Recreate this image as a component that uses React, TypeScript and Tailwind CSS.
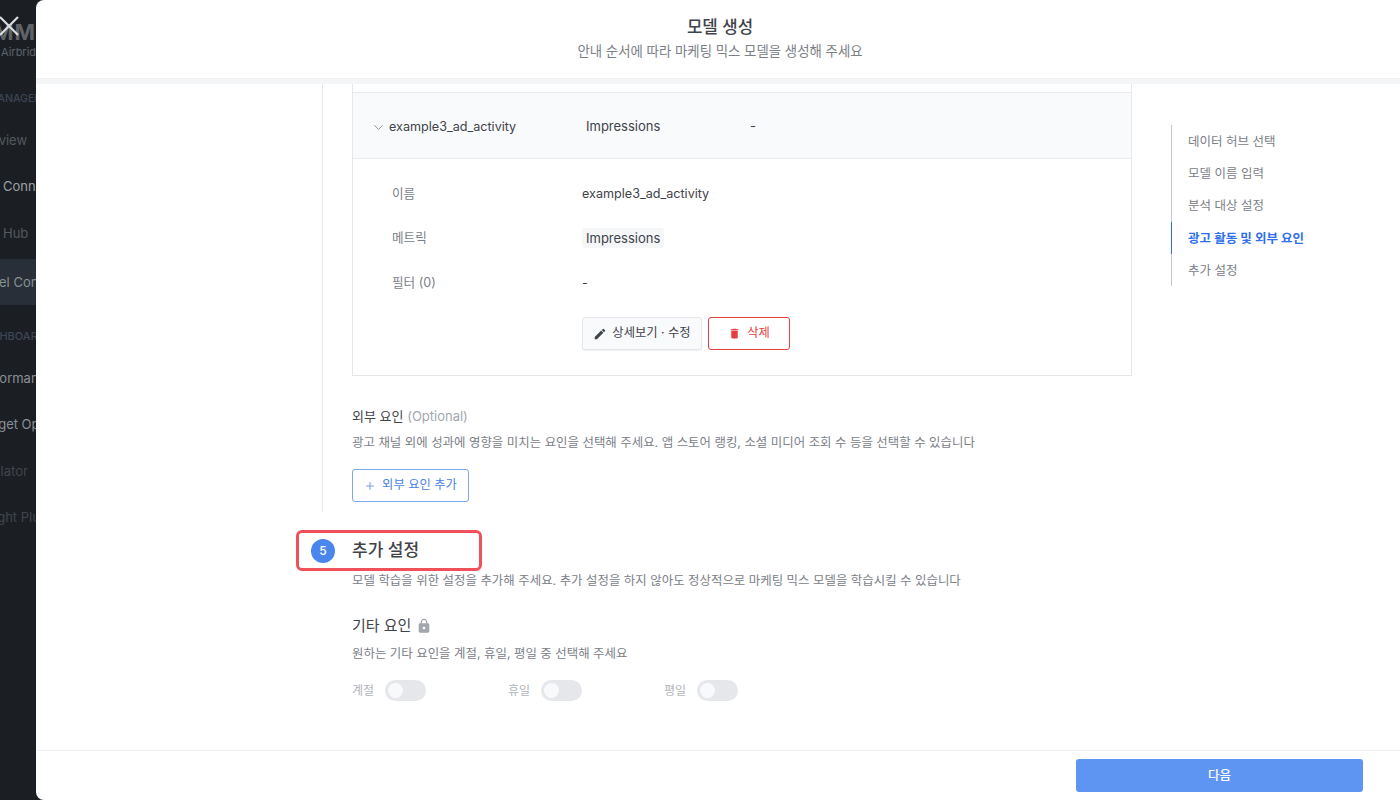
import { ChevronDown, Plus } from "lucide-react";
import { MdDelete, MdEdit, MdLock } from "react-icons/md";

const font = { fontFamily: '"Inter", "Noto Sans CJK KR", sans-serif' };

const tocItems = [
  { label: "데이터 허브 선택", active: false },
  { label: "모델 이름 입력", active: false },
  { label: "분석 대상 설정", active: false },
  { label: "광고 활동 및 외부 요인", active: true },
  { label: "추가 설정", active: false },
];

function Sidebar() {
  return (
    <div className="relative w-[36px] shrink-0 overflow-hidden bg-[#1b1f24] whitespace-nowrap">
      <div className="absolute left-[-3px] top-[14px] text-[#d9dbde]">
        <svg width="24" height="24" viewBox="0 0 24 24" fill="none" stroke="currentColor" strokeWidth="2.2">
          <path d="M3 3 L21 21 M21 3 L3 21" />
        </svg>
      </div>
      <div className="h-[93px] pt-[20px]">
        <div className="text-[22px] leading-[24px] font-bold tracking-[1px] text-[#5f6368] ml-[-7px]">MMM</div>
        <div className="text-[11px] leading-[14px] text-[#5f6368] ml-[1px] mt-[1px]">Airbridge</div>
      </div>
      <div className="ml-[-12px] text-[10.5px] leading-[11px] font-medium text-[#3d4654]">MANAGER</div>
      <div className="ml-[-31px] mt-[24px] h-[24px] text-[13px] leading-[24px] text-[#54585d]">Overview</div>
      <div className="ml-[3px] mt-[22px] h-[24px] text-[13px] leading-[24px] text-[#9ca0a4]">Connectors</div>
      <div className="ml-[3px] mt-[23px] h-[24px] text-[13px] leading-[24px] text-[#54585d]">Hub</div>
      <div className="mt-[14px] h-[46px] bg-[#282f38] text-[13px] leading-[46px] text-[#8a8f95]">
        <span className="ml-[-1px]">el Connect</span>
      </div>
      <div className="ml-[-23px] mt-[26px] text-[11px] leading-[11px] font-medium text-[#3d4654]">DASHBOARD</div>
      <div className="ml-[-26px] mt-[24px] h-[24px] text-[13px] leading-[24px] text-[#8a8f95]">Performance</div>
      <div className="ml-[-26px] mt-[22px] h-[24px] text-[13px] leading-[24px] text-[#8a8f95]">Budget Opt</div>
      <div className="ml-[-30px] mt-[23px] h-[24px] text-[13px] leading-[24px] text-[#41454a]">Simulator</div>
      <div className="ml-[-24px] mt-[22px] h-[24px] text-[13px] leading-[24px] text-[#41454a]">Insight Plus</div>
    </div>
  );
}

function DetailRow({ label, children }: { label: string; children: React.ReactNode }) {
  return (
    <div className="flex h-[22px] items-center">
      <div className="w-[229px] pl-[39px] text-[12.6px] text-[#7b8088]">{label}</div>
      <div className="text-[12.6px] text-[#3f434a]">{children}</div>
    </div>
  );
}

function Toggle({ label, width }: { label: string; width: string }) {
  return (
    <div className={`flex items-center ${width}`}>
      <span className="w-[33px] text-[12px] text-[#b0b4ba]">{label}</span>
      <div className="flex h-[21px] w-[41px] items-center rounded-full bg-[#e5e7eb] pl-[3px]">
        <div className="h-[15px] w-[15px] rounded-full bg-[#f8f9fa]" />
      </div>
    </div>
  );
}

export default function App() {
  return (
    <div className="flex h-[800px] w-[1400px] overflow-hidden bg-[#1b1f24]" style={font}>
      <Sidebar />
      <div className="flex flex-1 flex-col overflow-hidden rounded-l-[8px] bg-white">
        <div className="flex h-[78px] shrink-0 flex-col items-center pt-[15px] pl-[4px]">
          <div className="text-[16.8px] leading-[24px] font-medium text-[#3f434a]">모델 생성</div>
          <div className="text-[13.4px] leading-[24px] text-[#7b8088]">안내 순서에 따라 마케팅 믹스 모델을 생성해 주세요</div>
        </div>
        <div className="h-[6px] shrink-0 border-t border-[#eef0f3] bg-[#f4f5f7]" />

        <div className="relative flex-1 overflow-hidden">
          <div className="ml-[286px] h-[428px] w-[810px] border-l border-[#e5e7eb] pl-[29px]">
            <div className="h-[292px] w-[780px] border-x border-b border-[#e5e7eb]">
              <div className="h-[8px]" />
              <div className="flex h-[67px] items-center border-y border-[#e9ebee] bg-[#f9fafb] pt-[3px] pl-[18px] text-[13px] text-[#3f434a]">
                <ChevronDown size={15} strokeWidth={1.25} className="text-[#6b7280]" />
                <span className="ml-[3px] w-[193px] text-[12.6px]">example3_ad_activity</span>
                <span className="w-[168px] pl-[4px]">Impressions</span>
                <span>-</span>
              </div>
              <div className="flex flex-col gap-[22.5px] pt-[24px]">
                <DetailRow label="이름">example3_ad_activity</DetailRow>
                <DetailRow label="메트릭">
                  <span className="rounded-[3px] bg-[#f5f6f7] px-[4px] py-[2px] text-[13px]">Impressions</span>
                </DetailRow>
                <DetailRow label="필터 (0)">-</DetailRow>
              </div>
              <div className="mt-[23px] flex gap-[6px] pl-[229px]">
                <button className="flex h-[33px] w-[120px] items-center justify-center gap-[5px] rounded-[3px] border border-[#e5e7eb] bg-[#f9fafb] text-[12.3px] text-[#3f434a] shadow-[0_1px_1px_rgba(0,0,0,0.06)]">
                  <MdEdit size={14} />
                  상세보기 · 수정
                </button>
                <button className="flex h-[33px] w-[82px] items-center justify-center gap-[6px] rounded-[3px] border border-[#e53e3e] bg-white text-[12.3px] text-[#e53e3e]">
                  <MdDelete size={13} />
                  삭제
                </button>
              </div>
            </div>

            <div className="mt-[29px] text-[13px] leading-[22px] text-[#3f434a]">
              외부 요인 <span className="text-[#a3a7ad]">(Optional)</span>
            </div>
            <div className="mt-[5px] text-[12.45px] leading-[22px] text-[#7b8088]">
              광고 채널 외에 성과에 영향을 미치는 요인을 선택해 주세요. 앱 스토어 랭킹, 소셜 미디어 조회 수 등을 선택할 수 있습니다
            </div>
            <button className="mt-[15px] flex h-[33px] w-[117px] items-center justify-center gap-[6px] rounded-[3px] border border-[#7fa6f0] bg-white text-[12.3px] text-[#4a82e8]">
              <Plus size={12} strokeWidth={1.5} />
              외부 요인 추가
            </button>
          </div>

          <div className="ml-[275px] mt-[27px] flex h-[24px] items-center">
            <div className="flex h-[24px] w-[24px] items-center justify-center rounded-full bg-[#4a86ec] text-[12px] font-medium text-white">5</div>
            <div className="ml-[17px] text-[17px] font-medium text-[#3f434a]">추가 설정</div>
          </div>
          <div className="ml-[316px] mt-[7px] text-[12.45px] leading-[22px] text-[#7b8088]">
            모델 학습을 위한 설정을 추가해 주세요. 추가 설정을 하지 않아도 정상적으로 마케팅 믹스 모델을 학습시킬 수 있습니다
          </div>
          <div className="ml-[316px] mt-[22px] flex h-[24px] items-center gap-[5px] text-[15px] text-[#3f434a]">
            기타 요인
            <MdLock size={16} className="text-[#a3a7ad]" />
          </div>
          <div className="ml-[316px] mt-[5px] text-[12.45px] leading-[22px] text-[#7b8088]">
            원하는 기타 요인을 계절, 휴일, 평일 중 선택해 주세요
          </div>
          <div className="ml-[316px] mt-[15px] flex">
            <Toggle label="계절" width="w-[156px]" />
            <Toggle label="휴일" width="w-[156px]" />
            <Toggle label="평일" width="w-[156px]" />
          </div>

          {/* annotation box from the guide */}
          <div className="absolute left-[260px] top-[446px] h-[41px] w-[186px] rounded-[6px] border-[3px] border-[#f0505a]" />

          {/* page nav on the right */}
          <div className="absolute left-[1135px] top-[41px] w-[180px]">
            {tocItems.map((item) => (
              <div
                key={item.label}
                className={`flex h-[32.3px] items-center border-l pt-[2px] pl-[16px] text-[12.5px] ${
                  item.active ? "border-[#2f6fed] font-semibold text-[#2f6fed]" : "border-[#c5cad1] text-[#7b8088]"
                }`}
              >
                {item.label}
              </div>
            ))}
          </div>
        </div>

        <div className="flex h-[50px] shrink-0 items-start justify-end border-t border-[#eef0f3] pt-[8px] pr-[37px]">
          <button className="h-[33px] w-[287px] rounded-[3px] bg-[#5f95f2] pt-[1px] text-[12.5px] font-medium text-white">다음</button>
        </div>
      </div>
    </div>
  );
}
